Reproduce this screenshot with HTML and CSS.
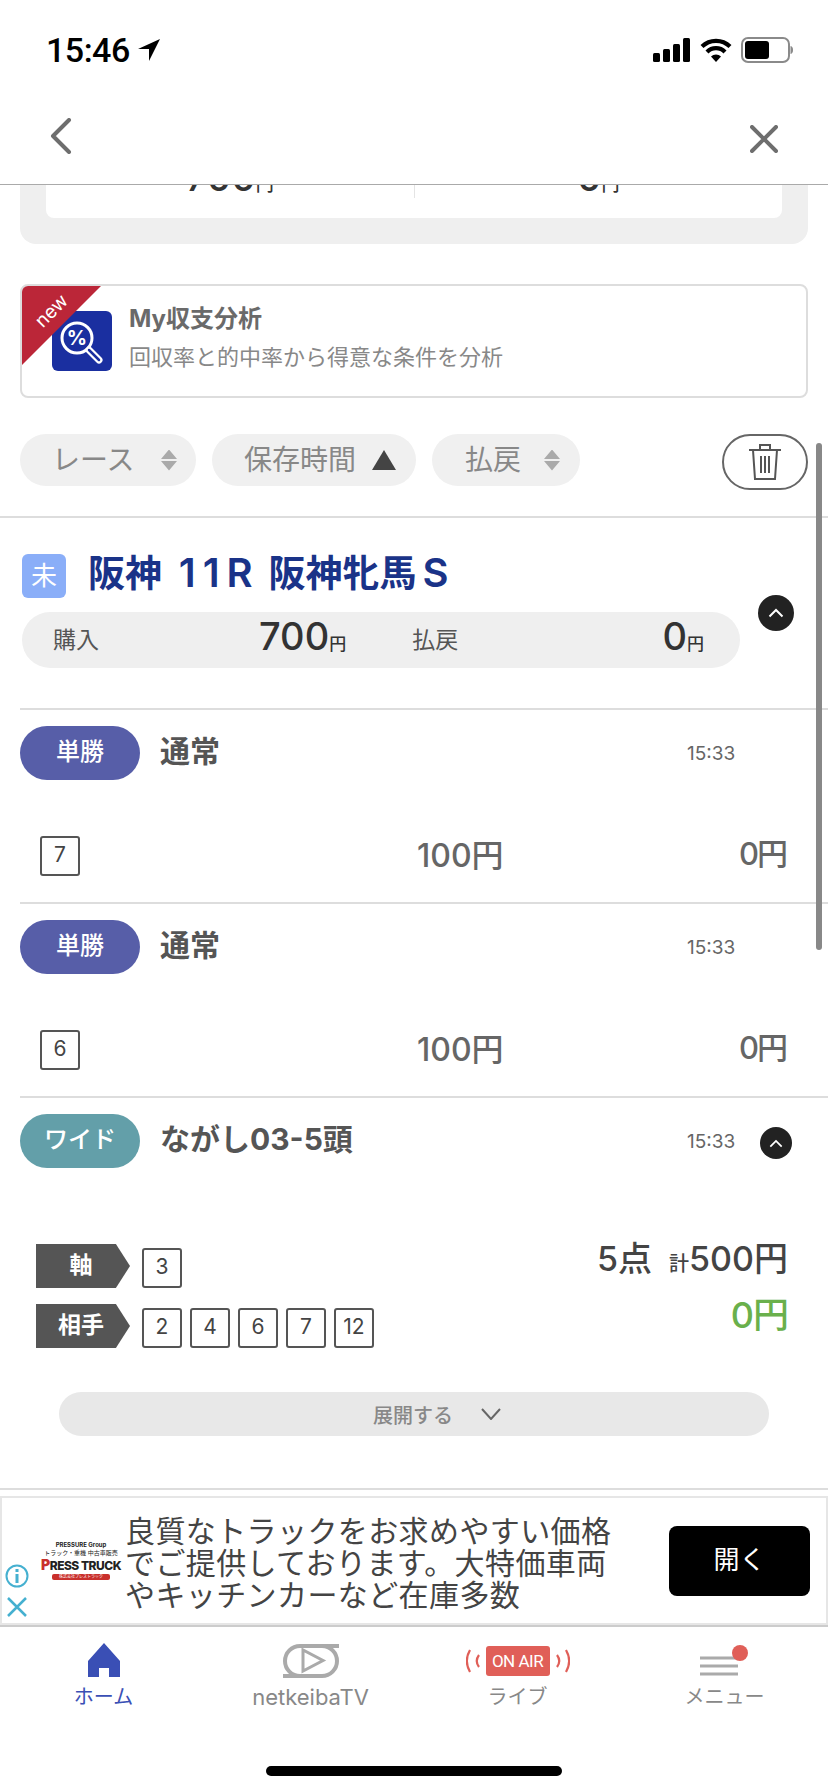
FILE: index.html
```html
<!DOCTYPE html>
<html lang="ja">
<head>
    <meta charset="UTF-8">
    <meta name="viewport" content="width=device-width, initial-scale=1.0">
    <title>購入履歴</title>
    <link rel="stylesheet" href="styles.css">
</head>
<body>
<div class="phone">
    <div class="statusbar">
        <div class="clock">
            <span>15:46</span>
            <svg class="loc-icon" width="24" height="24" viewBox="0 0 24 24"><path d="M23 1 1 11h11v12z" fill="#000"/></svg>
        </div>
        <div class="status-icons">
            <svg width="38" height="24" viewBox="0 0 38 24"><g fill="#000"><rect x="0" y="15" width="7" height="9" rx="1.5"/><rect x="10" y="11" width="7" height="13" rx="1.5"/><rect x="20" y="6" width="7" height="18" rx="1.5"/><rect x="30" y="0" width="7" height="24" rx="1.5"/></g></svg>
            <svg width="32" height="24" viewBox="0 0 32 24"><path d="M2 8.5a20 20 0 0 1 28 0M7 14a12.5 12.5 0 0 1 18 0" fill="none" stroke="#000" stroke-width="4.2"/><path d="M11 18.5a7 7 0 0 1 10 0L16 24z" fill="#000"/></svg>
            <svg width="52" height="26" viewBox="0 0 52 26"><rect x="1" y="1" width="47" height="24" rx="6" fill="#fff" stroke="#8a8a8a" stroke-width="2"/><rect x="4" y="4" width="24" height="18" rx="3" fill="#000"/><path d="M49.500 9c2 .5 2.500 2 2.500 4s-.5 3.500-2.500 4z" fill="#8a8a8a"/></svg>
        </div>
    </div>

    <div class="navbar">
        <svg width="22" height="36" viewBox="0 0 22 36"><path d="M19 2 3 18l16 16" fill="none" stroke="#6e6e6e" stroke-width="4" stroke-linecap="round" stroke-linejoin="round"/></svg>
        <svg width="28" height="28" viewBox="0 0 28 28"><path d="M2 2l24 24M26 2 2 26" fill="none" stroke="#6e6e6e" stroke-width="4" stroke-linecap="round"/></svg>
    </div>

    <div class="scroll">
        <div class="scrollbar"></div>

        <div class="total-card">
            <div class="total-inner">
                <div class="total-cell"><span class="total-num">700<small>円</small></span></div>
                <div class="total-cell total-cell-right"><span class="total-num">0<small>円</small></span></div>
            </div>
        </div>

        <div class="analysis-card">
            <div class="new-ribbon"></div>
            <span class="new-label">new</span>
            <svg class="analysis-icon" width="60" height="60" viewBox="0 0 60 60">
                <rect width="60" height="60" rx="6" fill="#1a2fa0"/>
                <circle cx="25" cy="27" r="15" fill="none" stroke="#fff" stroke-width="3"/>
                <text x="25" y="34" font-size="20" font-weight="700" font-family="Inter, sans-serif" fill="#fff" text-anchor="middle">%</text>
                <path d="M37 39l10 10" stroke="#fff" stroke-width="7" stroke-linecap="round"/>
                <path d="M37 39l10 10" stroke="#1a2fa0" stroke-width="2.500" stroke-linecap="round"/>
            </svg>
            <div class="analysis-text">
                <div class="analysis-title">My収支分析</div>
                <div class="analysis-sub">回収率と的中率から得意な条件を分析</div>
            </div>
        </div>

        <div class="filters">
            <div class="pill pill-race"><span>レース</span> <span class="sort-arrows"></span></div>
            <div class="pill pill-time"><span>保存時間</span> <span class="sort-up"></span></div>
            <div class="pill pill-pay"><span>払戻</span> <span class="sort-arrows"></span></div>
            <div class="trash-btn">
                <svg width="32" height="36" viewBox="0 0 32 36"><g fill="none" stroke="#555" stroke-width="2"><path d="M0 6h32M11 6V1h10v5M4 6l2 29h20l2-29"/><path d="M12 12v17M16 12v17M20 12v17"/></g></svg>
            </div>
        </div>

        <div class="race">
            <div class="race-main">
                <div class="race-title-row">
                    <span class="race-badge">未</span>
                    <span class="race-title">阪神 <span class="race-latin race-no">11R</span> 阪神牝馬<span class="race-latin race-s">S</span></span>
                </div>
                <div class="race-summary">
                    <span class="sum-label">購入</span>
                    <span class="sum-num sum-buy">700<small>円</small></span>
                    <span class="sum-label sum-pay-label">払戻</span>
                    <span class="sum-num sum-pay">0<small>円</small></span>
                </div>
            </div>
            <span class="toggle toggle-big"><svg width="16" height="10" viewBox="0 0 16 10"><path d="M1.500 8.500 8 2l6.500 6.500" fill="none" stroke="#fff" stroke-width="2"/></svg></span>
        </div>

        <div class="bet">
            <div class="bet-head">
                <span class="bet-type type-win">単勝</span>
                <span class="bet-name">通常</span>
                <span class="bet-time">15:33</span>
            </div>
            <div class="bet-row">
                <span class="num-box">7</span>
                <span class="bet-amount">100円</span>
                <span class="bet-return">0円</span>
            </div>
        </div>

        <div class="bet">
            <div class="bet-head">
                <span class="bet-type type-win">単勝</span>
                <span class="bet-name">通常</span>
                <span class="bet-time">15:33</span>
            </div>
            <div class="bet-row">
                <span class="num-box">6</span>
                <span class="bet-amount">100円</span>
                <span class="bet-return">0円</span>
            </div>
        </div>

        <div class="bet bet-last">
            <div class="bet-head">
                <span class="bet-type type-wide">ワイド</span>
                <span class="bet-name">ながし03-5頭</span>
                <span class="bet-time">15:33</span>
                <span class="toggle"><svg width="14" height="9" viewBox="0 0 16 10"><path d="M1.500 8.500 8 2l6.500 6.500" fill="none" stroke="#fff" stroke-width="2"/></svg></span>
            </div>
            <div class="wide-body">
                <div class="wide-left">
                    <div class="wide-line">
                        <span class="tag">軸</span>
                        <span class="num-box">3</span>
                    </div>
                    <div class="wide-line">
                        <span class="tag">相手</span>
                        <span class="num-box">2</span>
                        <span class="num-box">4</span>
                        <span class="num-box">6</span>
                        <span class="num-box">7</span>
                        <span class="num-box">12</span>
                    </div>
                </div>
                <div class="wide-right">
                    <div class="wide-total">5点 <small>計</small>500円</div>
                    <div class="wide-return">0円</div>
                </div>
            </div>
            <div class="expand">
                <span>展開する</span>
                <svg width="20" height="12" viewBox="0 0 20 12"><path d="M1 1l9 10 9-10" fill="none" stroke="#666" stroke-width="2"/></svg>
            </div>
        </div>
        <div class="scroll-end"></div>
    </div>

    <div class="ad">
        <div class="ad-side">
            <svg width="24" height="24" viewBox="0 0 24 24"><circle cx="12" cy="12" r="10.500" fill="none" stroke="#45b0d0" stroke-width="2"/><path d="M12 10v9M12 5v3" stroke="#45b0d0" stroke-width="3"/></svg>
            <svg width="20" height="20" viewBox="0 0 20 20"><path d="M1 1l18 18M19 1 1 19" stroke="#45b0d0" stroke-width="2.500"/></svg>
        </div>
        <div class="ad-logo">
            <span class="logo-group">PRESSURE Group</span>
            <span class="logo-small">トラック・重機 中古車販売</span>
            <span class="logo-main"><b>P</b>RESS TRUCK</span>
            <span class="logo-bar">株式会社プレストラック</span>
        </div>
        <div class="ad-copy">良質なトラックをお求めやすい価格でご提供しております。大特価車両やキッチンカーなど在庫多数</div>
        <div class="ad-btn">開く</div>
    </div>

    <div class="tabbar">
        <div class="tabs">
            <div class="tab tab-active">
                <svg width="32" height="36" viewBox="0 0 32 36"><path d="M16 0 32 18v16H21V25H11v9H0V18z" fill="#3a4fb5"/></svg>
                <span>ホーム</span>
            </div>
            <div class="tab">
                <svg width="56" height="36" viewBox="0 0 56 36"><g fill="none" stroke="#aaa" stroke-width="4"><path d="M56 3H17a15 15 0 0 0 0 30"/><path d="M0 33h39a15 15 0 0 0 0-30"/></g><path d="M20 7v21l20-10.500z" fill="none" stroke="#aaa" stroke-width="3"/></svg>
                <span class="tab-latin">netkeibaTV</span>
            </div>
            <div class="tab">
                <div class="onair">
                    <svg width="16" height="24" viewBox="0 0 16 24"><path d="M4 1C0 8 0 16 4 23M13 6c-3 4-3 8 0 12" fill="none" stroke="#e05f58" stroke-width="2.200"/></svg>
                    <span class="onair-label">ON AIR</span>
                    <svg width="16" height="24" viewBox="0 0 16 24"><path d="M12 1c4 7 4 15 0 22M3 6c3 4 3 8 0 12" fill="none" stroke="#e05f58" stroke-width="2.200"/></svg>
                </div>
                <span>ライブ</span>
            </div>
            <div class="tab">
                <svg width="50" height="36" viewBox="0 0 50 36"><path d="M0 15h36M0 23h38M0 31h38" stroke="#aaa" stroke-width="3"/><circle cx="40" cy="10" r="8" fill="#e05f58"/></svg>
                <span>メニュー</span>
            </div>
        </div>
        <div class="home-bar"></div>
    </div>
</div>
</body>
</html>
```

FILE: styles.css
```css
* {
    margin: 0;
    padding: 0;
    box-sizing: border-box;
}

body {
    font-family: Inter, 'Noto Sans CJK JP', sans-serif;
    background: #ffffff;
    color: #555;
}

.phone {
    width: 828px;
    height: 1792px;
    display: flex;
    flex-direction: column;
    overflow: hidden;
}

.statusbar {
    height: 92px;
    padding: 30px 35px 0 46px;
    display: flex;
    justify-content: space-between;
    align-items: flex-start;
}

.clock {
    display: flex;
    align-items: center;
    gap: 7px;
    font-family: Roboto, sans-serif;
    font-size: 34px;
    font-weight: 500;
    line-height: 40px;
    letter-spacing: -0.5px;
    color: #000;
}

.status-icons {
    display: flex;
    align-items: center;
    gap: 9px;
    padding-top: 7px;
}

.navbar {
    height: 93px;
    padding: 26px 50px 0;
    border-bottom: 1px solid #aaa;
    display: flex;
    justify-content: space-between;
    align-items: flex-start;
}

.navbar svg:last-child {
    margin-top: 7px;
}

.scroll {
    height: 1311px;
    flex-shrink: 0;
    position: relative;
    overflow: hidden;
}

.scrollbar {
    position: absolute;
    top: 258px;
    right: 6px;
    width: 6px;
    height: 507px;
    border-radius: 3px;
    background: #888;
}

.total-card {
    margin: 0 20px;
    padding: 0 26px 26px;
    background: #efefef;
    border-radius: 0 0 16px 16px;
}

.total-inner {
    height: 33px;
    background: #fff;
    border-radius: 0 0 8px 8px;
    display: flex;
    overflow: hidden;
}

.total-cell {
    flex: 1;
    height: 13px;
    text-align: center;
    overflow: hidden;
}

.total-cell-right {
    border-left: 1px solid #e4e4e4;
}

.total-num {
    display: block;
    margin-top: -30px;
    font-size: 38px;
    font-weight: 500;
    line-height: 44px;
    color: #333;
}

.total-num small {
    font-size: 18px;
}

.analysis-card {
    position: relative;
    margin: 40px 20px 0;
    height: 114px;
    border: 2px solid #ddd;
    border-radius: 8px;
    padding: 25px 0 0 30px;
    display: flex;
    gap: 17px;
}

.new-ribbon {
    position: absolute;
    top: 0;
    left: 0;
    width: 79px;
    height: 79px;
    background: #bb2638;
    clip-path: polygon(0 0, 100% 0, 0 100%);
    border-top-left-radius: 6px;
}

.new-label {
    position: absolute;
    top: 13px;
    left: 11px;
    font-size: 19px;
    line-height: 24px;
    color: #fff;
    transform: rotate(-45deg);
}

.analysis-icon {
    flex-shrink: 0;
}

.analysis-title {
    font-size: 24px;
    font-weight: 700;
    line-height: 30px;
    margin-top: -7px;
    color: #6a6a6a;
}

.analysis-sub {
    font-size: 22px;
    line-height: 30px;
    margin-top: 8px;
    color: #888;
}

.filters {
    margin: 36px 20px 0;
    height: 56px;
    display: flex;
    align-items: flex-start;
    gap: 16px;
}

.pill {
    height: 52px;
    border-radius: 26px;
    background: #f0f0f0;
    display: flex;
    align-items: center;
    justify-content: space-between;
    font-size: 28px;
    color: #888;
}

.pill > span:first-child {
    margin-top: -4px;
}

.pill-race {
    width: 176px;
    padding: 0 19px 0 32px;
}

.pill-time {
    width: 204px;
    padding: 0 20px 0 32px;
}

.pill-pay {
    width: 148px;
    padding: 0 20px 0 33px;
}

.sort-arrows {
    display: block;
    width: 16px;
    height: 21px;
    background: linear-gradient(#aaa, #aaa);
    clip-path: polygon(50% 0, 100% 45%, 0 45%, 0 55%, 100% 55%, 50% 100%, 0 55%, 0 45%);
}

.sort-up {
    display: block;
    width: 24px;
    height: 20px;
    background: #444;
    clip-path: polygon(50% 0, 100% 100%, 0 100%);
}

.trash-btn {
    margin-left: auto;
    width: 86px;
    height: 56px;
    border: 2px solid #666;
    border-radius: 28px;
    display: flex;
    align-items: center;
    justify-content: center;
}

.race {
    margin-top: 26px;
    border-top: 2px solid #ddd;
    padding: 36px 0 40px 22px;
    display: flex;
    align-items: center;
}

.race-main {
    width: 718px;
}

.race-title-row {
    display: flex;
    align-items: center;
    gap: 22px;
    height: 44px;
}

.race-badge {
    width: 44px;
    height: 44px;
    border-radius: 6px;
    background: #8aaef8;
    color: #fff;
    font-size: 26px;
    line-height: 44px;
    text-align: center;
}

.race-title {
    margin-top: -4px;
    font-size: 37px;
    font-weight: 700;
    line-height: 44px;
    color: #1a3388;
    white-space: nowrap;
}

.race-latin {
    font-size: 40px;
    font-weight: 600;
    line-height: 40px;
    letter-spacing: 7px;
}

.race-no {
    margin-left: 8px;
}

.race-s {
    margin-left: 6px;
}

.race-summary {
    margin-top: 14px;
    height: 56px;
    border-radius: 28px;
    background: #efefef;
    padding: 0 36px 0 31px;
    display: flex;
    align-items: center;
}

.sum-label {
    font-size: 23px;
    color: #555;
    margin-top: -4px;
}

.sum-num {
    font-size: 38px;
    font-weight: 500;
    color: #333;
    line-height: 44px;
}

.sum-num small {
    font-size: 17px;
}

.sum-buy {
    margin-left: 160px;
}

.sum-pay-label {
    margin-left: 66px;
}

.sum-pay {
    margin-left: auto;
}

.toggle {
    width: 32px;
    height: 32px;
    border-radius: 50%;
    background: #222;
    display: flex;
    align-items: center;
    justify-content: center;
}

.toggle-big {
    width: 36px;
    height: 36px;
    margin-left: 18px;
    margin-top: 4px;
}

.bet {
    margin-left: 20px;
    border-top: 2px solid #ddd;
    padding: 16px 0 26px;
}

.bet-head {
    height: 54px;
    display: flex;
    align-items: center;
}

.bet-type {
    width: 120px;
    height: 54px;
    border-radius: 27px;
    color: #fff;
    font-size: 24px;
    font-weight: 500;
    line-height: 52px;
    text-align: center;
}

.type-win {
    background: #575ea8;
}

.type-wide {
    background: #639fa9;
}

.bet-name {
    margin-left: 20px;
    margin-bottom: 8px;
    font-size: 30px;
    font-weight: 700;
    color: #555;
}

.bet-time {
    position: absolute;
    left: 687px;
    font-size: 19px;
    color: #666;
}

.bet-head .toggle {
    margin-left: auto;
    margin-right: 36px;
    margin-top: 4px;
}

.bet-row {
    margin-top: 56px;
    padding-left: 20px;
    padding-right: 42px;
    display: flex;
    align-items: center;
    justify-content: space-between;
    position: relative;
}

.num-box {
    width: 40px;
    height: 40px;
    border: 2px solid #555;
    border-radius: 3px;
    font-size: 21px;
    line-height: 34px;
    text-align: center;
    color: #444;
    background: #fff;
}

.bet-amount {
    position: absolute;
    left: 397px;
    top: -2px;
    font-size: 32px;
    font-weight: 500;
    line-height: 44px;
    color: #666;
}

.bet-return {
    margin-top: -4px;
    font-size: 31px;
    font-weight: 500;
    line-height: 44px;
    letter-spacing: -2px;
    color: #666;
}

.bet-last {
    padding-bottom: 52px;
}

.wide-body {
    margin-top: 76px;
    padding: 0 40px 0 16px;
    display: flex;
    justify-content: space-between;
}

.wide-left {
    display: flex;
    flex-direction: column;
    gap: 16px;
}

.wide-line {
    display: flex;
    align-items: flex-end;
    gap: 8px;
}

.tag {
    width: 94px;
    height: 44px;
    margin-right: 4px;
    background: #555;
    color: #fff;
    font-size: 23px;
    font-weight: 700;
    line-height: 42px;
    text-align: center;
    padding-right: 4px;
    clip-path: polygon(0 0, 85% 0, 100% 50%, 85% 100%, 0 100%);
}

.wide-right {
    text-align: right;
}

.wide-total {
    font-size: 34px;
    font-weight: 500;
    line-height: 44px;
    color: #444;
    margin-top: -7px;
}

.wide-total small {
    font-size: 20px;
    margin-left: 8px;
}

.wide-return {
    font-size: 36px;
    font-weight: 500;
    line-height: 44px;
    letter-spacing: -1px;
    margin-top: 7px;
    color: #6ab04c;
}

.expand {
    margin: 44px 59px 0 39px;
    height: 44px;
    padding-left: 46px;
    border-radius: 22px;
    background: #e8e8e8;
    display: flex;
    align-items: center;
    justify-content: center;
    gap: 28px;
    font-size: 20px;
    font-weight: 500;
    color: #888;
}

.scroll-end {
    border-top: 2px solid #ddd;
}

.ad {
    height: 129px;
    flex-shrink: 0;
    border: 2px solid #e6e6e6;
    display: flex;
    align-items: center;
    position: relative;
}

.ad-side {
    position: absolute;
    left: 3px;
    bottom: 6px;
    display: flex;
    flex-direction: column;
    align-items: center;
    gap: 9px;
}

.ad-logo {
    margin-left: 41px;
    width: 76px;
    flex-shrink: 0;
    display: flex;
    flex-direction: column;
    align-items: center;
    color: #222;
    line-height: 1;
    white-space: nowrap;
}

.logo-group {
    font-size: 6px;
    font-weight: 700;
}

.logo-small {
    font-size: 6px;
    margin-top: 2px;
}

.logo-main {
    font-size: 12px;
    font-weight: 800;
    margin-top: 2px;
    letter-spacing: -0.5px;
}

.logo-main b {
    color: #c9302c;
    font-size: 14px;
}

.logo-bar {
    margin-top: 2px;
    width: 58px;
    height: 6px;
    overflow: hidden;
    border-radius: 2px;
    background: #c9302c;
    color: #fff;
    font-size: 4px;
    line-height: 6px;
    text-align: center;
}

.ad-copy {
    margin-left: 6px;
    width: 496px;
    font-family: 'Noto Sans CJK JP', sans-serif;
    font-size: 30px;
    line-height: 32px;
    letter-spacing: 0.4px;
    color: #444;
}

.ad-btn {
    position: absolute;
    right: 16px;
    top: 28px;
    width: 141px;
    height: 70px;
    border-radius: 8px;
    background: #000;
    color: #fff;
    font-size: 26px;
    line-height: 68px;
    text-align: center;
}

.tabbar {
    flex: 1;
    border-top: 2px solid #ccc;
    display: flex;
    flex-direction: column;
}

.tabs {
    display: flex;
    padding-top: 16px;
}

.tab {
    flex: 1;
    display: flex;
    flex-direction: column;
    align-items: center;
    gap: 4px;
    font-size: 20px;
    line-height: 28px;
    color: #888;
}

.tab-latin {
    font-size: 22px;
}

.tab svg,
.onair {
    height: 36px;
}

.tab-active {
    color: #3a4fb5;
}

.onair {
    display: flex;
    align-items: center;
    gap: 4px;
}

.onair-label {
    width: 64px;
    height: 30px;
    border-radius: 3px;
    background: #e05f58;
    color: #fff;
    font-family: Roboto, sans-serif;
    font-size: 17px;
    font-weight: 400;
    letter-spacing: -0.5px;
    line-height: 30px;
    text-align: center;
}

.onair svg {
    height: 24px;
}

.home-bar {
    margin: auto auto 16px;
    width: 296px;
    height: 10px;
    border-radius: 5px;
    background: #000;
}
```
